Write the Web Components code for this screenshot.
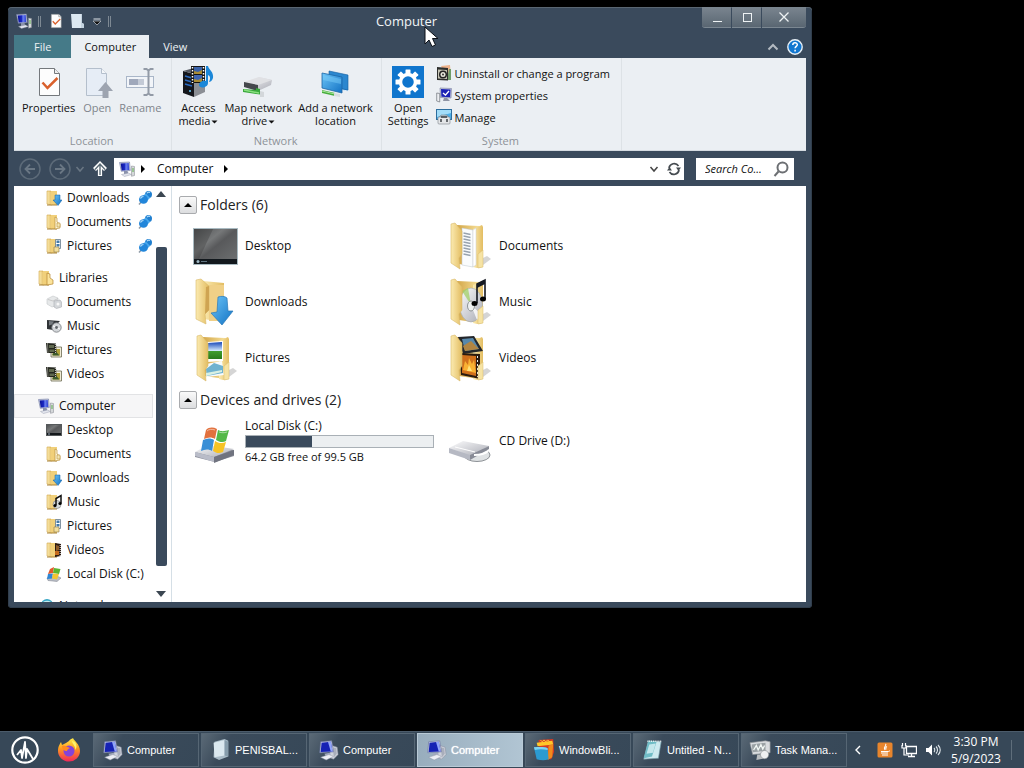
<!DOCTYPE html>
<html lang="en">
<head>
<meta charset="utf-8">
<title>Computer</title>
<style>
  html, body { height: 100%; }
  body {
    margin: 0;
    background: #000;
    color: #111;
    overflow: hidden;
    font: 12px/16px "Open Sans", "Noto Sans", sans-serif;
    --chrome: #3a4a5c;
    --ribbon: #ebeff3;
  }
</style>
</head>
<body>
<desktop-screen>
  <explorer-window>
    <title-bar slot="title">Computer</title-bar>
    <ribbon-tabs slot="tabs"></ribbon-tabs>

    <ribbon-bar slot="ribbon">
      <ribbon-group label="Location" class="wide">
        <ribbon-button icon="properties">Properties</ribbon-button>
        <ribbon-button icon="open" disabled>Open</ribbon-button>
        <ribbon-button icon="rename" disabled>Rename</ribbon-button>
      </ribbon-group>
      <ribbon-group label="Network">
        <ribbon-button icon="media" menu>Access<br>media</ribbon-button>
        <ribbon-button icon="mapdrive" menu>Map network<br>drive</ribbon-button>
        <ribbon-button icon="addlocation">Add a network<br>location</ribbon-button>
      </ribbon-group>
      <ribbon-group label="System">
        <ribbon-button icon="settings">Open<br>Settings</ribbon-button>
        <ribbon-list>
          <ribbon-link icon="uninstall">Uninstall or change a program</ribbon-link>
          <ribbon-link icon="sysprops">System properties</ribbon-link>
          <ribbon-link icon="manage">Manage</ribbon-link>
        </ribbon-list>
      </ribbon-group>
    </ribbon-bar>

    <address-bar slot="address">Computer</address-bar>

    <nav-tree slot="nav">
      <nav-item icon="f-downloads" pinned>Downloads</nav-item>
      <nav-item icon="f-documents" pinned>Documents</nav-item>
      <nav-item icon="f-pictures" pinned>Pictures</nav-item>
      <nav-item icon="f-library" top>Libraries</nav-item>
      <nav-item icon="l-documents">Documents</nav-item>
      <nav-item icon="l-music">Music</nav-item>
      <nav-item icon="l-film">Pictures</nav-item>
      <nav-item icon="l-film">Videos</nav-item>
      <nav-item icon="pc" top selected>Computer</nav-item>
      <nav-item icon="f-desktop">Desktop</nav-item>
      <nav-item icon="f-documents">Documents</nav-item>
      <nav-item icon="f-downloads">Downloads</nav-item>
      <nav-item icon="f-music">Music</nav-item>
      <nav-item icon="f-pictures">Pictures</nav-item>
      <nav-item icon="f-videos">Videos</nav-item>
      <nav-item icon="f-disk">Local Disk (C:)</nav-item>
      <nav-item icon="globe" top>Network</nav-item>
    </nav-tree>

    <item-group label="Folders (6)">
      <folder-item icon="desktop">Desktop</folder-item>
      <folder-item icon="documents">Documents</folder-item>
      <folder-item icon="downloads">Downloads</folder-item>
      <folder-item icon="music">Music</folder-item>
      <folder-item icon="pictures">Pictures</folder-item>
      <folder-item icon="videos">Videos</folder-item>
    </item-group>
    <item-group label="Devices and drives (2)">
      <folder-item icon="disk" used="35.3" size="99.5" note="64.2 GB free of 99.5 GB">Local Disk (C:)</folder-item>
      <folder-item icon="cd">CD Drive (D:)</folder-item>
    </item-group>
  </explorer-window>

  <task-bar slot="taskbar">
    <task-button icon="pclarge">Computer</task-button>
    <task-button icon="notepadfile">PENISBAL...</task-button>
    <task-button icon="pclarge">Computer</task-button>
    <task-button icon="pclarge" active>Computer</task-button>
    <task-button icon="blinds">WindowBli...</task-button>
    <task-button icon="notepad">Untitled - N...</task-button>
    <task-button icon="taskman">Task Mana...</task-button>
  </task-bar>
</desktop-screen>

<script>
const GRADS = `
<defs>
  <linearGradient id="fold" x1="0" x2="1"><stop offset="0" stop-color="#fbeab0"/><stop offset="1" stop-color="#e3bd62"/></linearGradient>
  <linearGradient id="back" x1="0" x2="1"><stop offset="0" stop-color="#d3a648"/><stop offset="1" stop-color="#f6df98"/></linearGradient>
  <linearGradient id="blue" x1="0" y1="0" x2="1" y2="1"><stop offset="0" stop-color="#6cc4f7"/><stop offset="1" stop-color="#1272c4"/></linearGradient>
  <linearGradient id="scr" x1="0" y1="0" x2="1" y2="0"><stop offset="0" stop-color="#0a1296"/><stop offset=".5" stop-color="#1d2cc8"/><stop offset=".6" stop-color="#6f86f2"/><stop offset="1" stop-color="#2a3cd0"/></linearGradient>
  <linearGradient id="metal" x1="0" y1="0" x2="1" y2="1"><stop offset="0" stop-color="#fdfdfe"/><stop offset="1" stop-color="#a9abb4"/></linearGradient>
  <linearGradient id="dark" x1="0" y1="0" x2="1" y2="1"><stop offset="0" stop-color="#4b4d4f"/><stop offset=".35" stop-color="#767879"/><stop offset=".5" stop-color="#58595b"/><stop offset="1" stop-color="#707374"/></linearGradient>
  <linearGradient id="sky" x1="0" y1="0" x2="0" y2="1"><stop offset="0" stop-color="#1747b8"/><stop offset=".5" stop-color="#cfe6fb"/><stop offset=".55" stop-color="#3f9c2c"/><stop offset="1" stop-color="#2a7a1c"/></linearGradient>
  <linearGradient id="fire" x1="0" y1="0" x2="0" y2="1"><stop offset="0" stop-color="#fff04a"/><stop offset=".45" stop-color="#ff9a1f"/><stop offset="1" stop-color="#f0275a"/></linearGradient>
</defs>`;

// open folder, 48px: cover on the left, contents in between
const folder = (inner) => `
  <path d="M34 46l12-9-4-3-8 4z" fill="#888" opacity=".35"/>
  <path d="M12 3l22 1v41l-20-3z" fill="url(#back)"/>
  <path d="M28 7l9-4 1 2v40l-6 1-4-1z" fill="url(#fold)"/>
  ${inner}
  <path d="M33 32l5-4v17l-5 1z" fill="#f6e3a4" stroke="#d9bb6a" stroke-width=".5"/>
  <path d="M6 2l4-1 7 8v23l-3 4 1 11-9-6z" fill="url(#fold)" stroke="#d9b96a" stroke-width=".6"/>`;

// small folder, 16px
const smallFolder = (inner = "") => `
  <path d="M4 1h7v14l-7-1z" fill="url(#back)"/>
  <path d="M1 1h4l1 2v12l-5-1z" fill="url(#fold)" stroke="#d0a548" stroke-width=".6"/>
  <path d="M5 1h6v14H5z" fill="#f1d07a"/>
  <path d="M1 15h10" stroke="#a98438"/>${inner}`;

const ICONS = {
  pc: [16, `<path d="M.5 1.500l10-.5.8 8.500-9 .8z" fill="#c3c9e0" stroke="#6d779f" stroke-width=".6"/>
    <path d="M1.700 2.500l8-.5.600 7-7.600.5z" fill="url(#scr)"/>
    <path d="M5 10h3.500l1 3H5z" fill="#8a92ac"/><path d="M2.500 13.500l7-1.500 3 1.500-7 2z" fill="#e3e6ee" stroke="#8b91a5" stroke-width=".4"/>
    <path d="M12.500 5l3 .5v9l-3 .8z" fill="#d5d8da" stroke="#80858c" stroke-width=".5"/><path d="M13 8h2M13 10h2" stroke="#5fae4e"/>`],
  pclarge: [24, `<path d="M16 7l6 2 1 8-5 5-5-2z" fill="#cfd3dc" stroke="#8a90a0" stroke-width=".6"/><path d="M17 9l4 1 .5 6-3 4z" fill="#a9aebb"/>
    <path d="M4 3l12-1 2 12-15 1z" fill="#c9cfe8" stroke="#6974a0" stroke-width=".7"/><path d="M5 4l10-1 2 10.500-13 .8z" fill="#1622b4"/><path d="M12 3.300l3-.3 2 10.500-2 .1z" fill="#90a4f8"/>
    <path d="M8 16l6-1 1 3-5 1z" fill="#a1a8bd"/><path d="M4 20l9-3 5 2-8 4z" fill="#eceef4" stroke="#9298a8" stroke-width=".5"/>`],
  properties: [32, `<path d="M6.500 2.500h15l5 5v22h-20z" fill="#fdfdfd" stroke="#74787c"/><path d="M21.500 2.500v5h5" fill="#eee" stroke="#74787c"/>
    <path d="M9.500 16.500l5 5.500 10-10" fill="none" stroke="#d9602c" stroke-width="2.500"/>`],
  open: [32, `<path d="M5.500 2.500h15l5 5v22h-20z" fill="#e6edf6" stroke="#b4bfcc"/><path d="M20.500 2.500v5h5" fill="#f4f7fa" stroke="#b4bfcc"/>
    <path d="M24.500 16l7.500 9h-4.500v7h-6v-7H17z" fill="#9da4b0"/>`],
  rename: [32, `<rect x="2.500" y="10.500" width="27" height="11" fill="#f2f5f9" stroke="#a9b6c8"/><rect x="5" y="13" width="15" height="6" fill="#9fa8bb"/><path d="M14 13h6v6h-6z" fill="#c3cad6"/>
    <path d="M19.500 3h3l2 1.500 2-1.500h3M19.500 29h3l2-1.500 2 1.500h3M24.500 4.500v23" fill="none" stroke="#929aa6" stroke-width="2"/>`],
  media: [32, `<path d="M1 5l11 3v23L1 27z" fill="#15171c"/><path d="M12 8l11-3v21l-11 5z" fill="#8b8f95"/><path d="M1 5l11-3 11 3-11 3z" fill="#565a62"/>
    <path d="M3 10l7 2M3 14l7 2M3 18l7 2" stroke="#2c6cc2" stroke-width="1.500"/><path d="M8 24v2" stroke="#6bd0ff" stroke-width="1.500"/>
    <path d="M9 0h14v17H9z" fill="#141414"/><path d="M12 1h8v7h-8z" fill="#3b62a8"/><path d="M12 9h8v7h-8z" fill="#3d64b0"/><path d="M12 5l4 1 4-2v4h-8zM12 13l4 1 4-2v4h-8z" fill="#a98c35"/>
    <path d="M10.500 1v16M21.500 1v16" stroke="#fff" stroke-width="1.500" stroke-dasharray="1.500 1.500"/>
    <path d="M24 0h2c1 4 6 6 5 12-1 3-3 4-4 4 2-4 1-6-1-7v8c0 5-9 6-9 2 0-3 4-5 7-4z" fill="#1b87d8"/>`],
  mapdrive: [32, `<path d="M2 16l15-5 13 3-1 5-13 6-14-4z" fill="url(#metal)"/><path d="M2 16l15-5 13 3-14 5z" fill="#e0e1e4"/><path d="M2 16l14 3v6L2 21z" fill="#45484c"/>
    <path d="M1 23l13 1v-2l4 1v3l4 1v2l-8-1-13-2z" fill="#39a83c"/><path d="M2 24l15 3" stroke="#8ae07f" stroke-width="1.500"/><path d="M18 25l4 1v5h-4z" fill="#d3d7da"/>`],
  addlocation: [32, `<path d="M9 5l19 4v16l-5-1" fill="#2d8ed8" stroke="#d9ecfa"/><path d="M9 5l19 4v15l-19-4z" fill="#2b87cf" stroke="#1a5e9c" stroke-width=".6"/>
    <path d="M2 7l20 4v16L2 22z" fill="url(#blue)" stroke="#1c66a5" stroke-width=".8"/><path d="M3 9l18 4v5L3 14z" fill="#7fd0fa" opacity=".45"/>
    <path d="M2 24l13 3v3L2 27z" fill="#46ad3c"/><path d="M2 25l13 3" stroke="#a8e79a"/><path d="M14 27l6 1v3l-6-1z" fill="#d8dde0"/>`],
  settings: [32, `<rect width="32" height="32" fill="#0f75cd"/><g fill="#fff" transform="translate(16 16)">
    <g id="t"><rect x="-2.500" y="-12.500" width="5" height="5" rx=".5"/><rect x="-2.500" y="7.500" width="5" height="5" rx=".5"/></g>
    <use href="#t" transform="rotate(45)"/><use href="#t" transform="rotate(90)"/><use href="#t" transform="rotate(135)"/></g>
    <circle cx="16" cy="16" r="7.500" fill="none" stroke="#fff" stroke-width="3.500"/>`],
  uninstall: [16, `<path d="M5 1l9-1 1 12-3 3z" fill="#eeb38c"/><path d="M13 4h2v11h-4z" fill="#6f9c6a"/><path d="M1 2l11 1v12.500L1 15z" fill="#2c2e2c"/><path d="M2 4.500l9 .5v9L2 13.500z" fill="#c7c6b6"/>
    <circle cx="7" cy="9.500" r="4" fill="#222"/><circle cx="7" cy="9.500" r="2.500" fill="#e8e8dc"/><circle cx="7" cy="9.500" r="1" fill="#333"/>`],
  sysprops: [16, `<path d="M4 1l11.500.5-.5 9.500L4.500 10.500z" fill="#c9cde0" stroke="#777e9c" stroke-width=".6"/><path d="M5 2l9.500.4-.4 7.800L5.400 9.800z" fill="#1b22b4"/><path d="M7 6l2.500 2L13 4" fill="none" stroke="#fff" stroke-width="1.300"/>
    <path d="M8 11h3l3 3H7z" fill="#8f94a4"/><path d="M.7 6l3 .5V15l-3-1z" fill="#eceef2" stroke="#6f737a" stroke-width=".7"/>`],
  manage: [16, `<rect x=".5" y=".5" width="15" height="10" fill="#4aaee8" stroke="#2d6e9e"/><path d="M1 1h14v3L1 8z" fill="#a2dcf8"/><path d="M3 9l2-3h6l2 3" fill="#b4c4ce" stroke="#70808c" stroke-width=".6"/><rect x="2" y="8" width="12" height="7" rx="1" fill="#e4e6e8" stroke="#7b8288" stroke-width=".6"/><path d="M5 10v3M11 10v3M5 8h6" stroke="#3c4146" stroke-width="1.500"/>`],
  "f-downloads": [16, smallFolder(`<path d="M9 5h5v5h2l-4 5.500L7 10h2z" fill="url(#blue)" stroke="#0d5fa6" stroke-width=".5"/>`)],
  "f-documents": [16, smallFolder(`<path d="M9 3l2 1v4l3 2v4l-5 1z" fill="#fdf5d4" stroke="#bc9340" stroke-width=".7"/><path d="M11 9h3v4h-3z" fill="#f3e6b4" stroke="#bc9340" stroke-width=".6"/>`)],
  "f-library": [16, smallFolder(`<path d="M9 3l3 1v4l3 2v4l-6 1z" fill="#fbe39a" stroke="#b48530" stroke-width=".7"/>`)],
  "f-pictures": [16, smallFolder(`<path d="M9.500 1.500h5v9h-5z" fill="#fff" stroke="#62798c" stroke-width=".8"/><path d="M10.500 2.500h3V5h-3zM10.500 6h3v2.500h-3z" fill="#4379a8"/><path d="M8 9h5v5H8z" fill="#f3df9c" stroke="#8d7a4a" stroke-width=".6"/>`)],
  "f-music": [16, smallFolder(`<circle cx="11" cy="10.500" r="4" fill="#d4dadd" stroke="#777" stroke-width=".6"/><path d="M10 11V4.500l5-3v8" fill="none" stroke="#111" stroke-width="1.500"/><circle cx="9" cy="11.500" r="1.600"/><circle cx="14" cy="9.500" r="1.600"/>`)],
  "f-videos": [16, smallFolder(`<path d="M9 1l6 1v12l-6 1z" fill="#2b1a10"/><path d="M10 3l3 1v4l-3 1z" fill="#8c5a28"/><path d="M9 9h4v4H9z" fill="#c46a1c"/><path d="M14.200 3v11" stroke="#fff" stroke-width="1" stroke-dasharray="1 1"/>`)],
  "f-desktop": [16, `<rect x=".5" y="2.500" width="15" height="11" fill="url(#dark)" stroke="#565a5c"/><path d="M1 11h14v2H1z" fill="#14181b"/><path d="M2 12h2" stroke="#9ab"/>`],
  "f-disk": [16, `<path d="M1 12l10-2 4 2-4 3.500-9-1z" fill="#b9bdc6" stroke="#7a7e88" stroke-width=".5"/><path d="M4 3l4-2-1 6-5 1z" fill="#e3582a"/><path d="M8 2l6.500 1L13 8 7 7z" fill="#5cb531"/><path d="M2 8l5-.5-1 5-5 .5z" fill="#2f86d4"/><path d="M7 7.500l6 .5-2 5.500-5-1z" fill="#f4c430"/>`],
  "l-documents": [16, `<path d="M1 5l6-3 5 2v7l-6 2-5-3z" fill="#e6e8e9" stroke="#c4c7ca" stroke-width=".6"/><path d="M2 5.500l5 1.500 5-2.500" fill="none" stroke="#bbb" stroke-width=".7"/><path d="M8 7l6-1 1.500 2v5l-5 1.500L8 13z" fill="#d4d7da" stroke="#a9adb1" stroke-width=".6"/><circle cx="12" cy="10" r="1.500" fill="#f8f8f8"/>`],
  "l-music": [16, `<path d="M1 2l13 1-3 3-4 3v3l-6-1z" fill="#303336"/><path d="M3 3l5 .5-2 3-3 1z" fill="#767b80"/><circle cx="10.500" cy="9.500" r="4.700" fill="#d3d6d9" stroke="#75797d" stroke-width=".8"/><path d="M7 8l7 3" stroke="#fff"/><circle cx="10.500" cy="9.500" r="1.400" fill="#60656a"/>`],
  "l-film": [16, `<path d="M5 5h10.500v10H5z" fill="#f0ecd8" stroke="#6a6a52" stroke-width=".8"/><path d="M6.500 7h7.500v6.500H6.500z" fill="#b1a23b"/><path d="M6.500 12l3-3 4 4.500h-7z" fill="#3c5a2c"/>
    <path d="M0 1l10 .5.500 9.500L1 11z" fill="#24261f"/><path d="M3 3h5v3H3zM3.500 7.500h5V10h-5z" fill="#5f684e"/><path d="M1.500 1.500l.5 10M9.300 2l.3 9" stroke="#e4e4d8" stroke-width=".9" stroke-dasharray="1 1"/>`],
  globe: [16, `<circle cx="9" cy="7" r="6" fill="#35a5c4"/><path d="M5 4c3-2 6-1 8 0-2 2-5 1-8 0z" fill="#bfeaf0"/><path d="M9 8h6v5H9z" fill="#2c57b8"/>`],
  pin: [16, `<path d="M2 14.500l4-4.500" stroke="#8d99a5" stroke-width="1.500"/><circle cx="11.500" cy="4.500" r="3.500" fill="#1f7fd0"/><path d="M6 5.500l3-2L13 8l-2.500 2.500z" fill="#4aa9ee"/><ellipse cx="6.500" cy="9.500" rx="4.500" ry="4.300" fill="#2286da"/><path d="M3.500 8.500c.5-1.500 2-2 3-2M10 3.300c.5-1 2-1.500 3-.8" fill="none" stroke="#b7e0fb" stroke-width="1.200"/>`],
  desktop: [48, `<rect x="2.500" y="6.500" width="44" height="36" fill="url(#dark)" stroke="#a9bac1"/><path d="M3 37h43v5H3z" fill="#12181d"/><circle cx="7" cy="39.500" r="1.500" fill="#9fb8c4"/><path d="M10 39.500h6" stroke="#607480"/><path d="M3 7h19L8 37H3z" fill="#333" opacity=".3"/>`],
  documents: [48, folder(`<path d="M17 6l11 2v37l-11-2z" fill="#fafcfd" stroke="#bcc6cc" stroke-width=".5"/><path d="M18.500 11l7 1.500M18.500 14l7 1.500M18.500 17l7 1.500M18.500 20l7 1.500M18.500 23l7 1.500M18.500 26l7 1.500M18.500 29l7 1.500M18.500 32l7 1.500" stroke="#98a3ae" stroke-width="1.400"/><path d="M28 8l3-2v37l-3 2z" fill="#fff" stroke="#c8ced2" stroke-width=".5"/>`)],
  downloads: [48, `<path d="M12 3l21 2v39l-21-3z" fill="url(#fold)"/><path d="M18 7h15v36H18z" fill="#f0d087"/>
    <path d="M5 2l5-1 8 7v24l-4 4 1 10-10-5z" fill="url(#fold)" stroke="#d9b96a" stroke-width=".6"/><path d="M15 9l3-1v24l-4 4z" fill="#cfa452"/>
    <path d="M27 19c3-1 7-1 9 1l1 13h5L31 47 20 35l6-1z" fill="url(#blue)" stroke="#2a78b8" stroke-width=".7"/>`],
  music: [48, folder(`<ellipse cx="26" cy="27" rx="11.500" ry="17" fill="url(#metal)" stroke="#a2a7a8" stroke-width=".6"/><path d="M26 27L17 13l6-3z" fill="#9ccf5e" opacity=".7"/><path d="M26 27l6 15 4-6z" fill="#fff" opacity=".8"/><ellipse cx="26" cy="28" rx="3.500" ry="5" fill="#eef0f0" stroke="#8d9394"/>`)
    + `<path d="M32 25V6l8-4v19" fill="none" stroke="#141821" stroke-width="1.600"/><path d="M32 6l8-4v4l-8 4z" fill="#141821"/><ellipse cx="29.500" cy="25.500" rx="3" ry="2.500"/><ellipse cx="38" cy="21" rx="3" ry="2.500"/>`],
  pictures: [48, folder(`<path d="M16 8l16-1v20l-16 1z" fill="#fff"/><path d="M17 9l14-1v17H17z" fill="url(#sky)"/><path d="M15 30l16-3 2 14-17 2z" fill="#f8fbfc"/><path d="M15 35l8-6 9 3v7l-16 3z" fill="#6fb2cf"/><path d="M15 39l16-3v2l-16 4z" fill="#d9f0e2"/>`)],
  videos: [48, folder(`<path d="M13 3l16-1 9 15-20 3z" fill="#23262b"/><path d="M17 5l11-1 6 11-14 2z" fill="#5788ab"/><path d="M18 12l8-5 8 8-14 2z" fill="#b18542"/><path d="M15 19l20 1v25l-19-4z" fill="#2a1b10"/><path d="M17 21l14 1v20l-14-3z" fill="#d0701c"/><path d="M18 36l2-9 3 4 1-7 3 6 2-4 2 13z" fill="#f9b233"/><path d="M22 37l2-6 3 6z" fill="#ffe27a"/><path d="M32.500 22v21" stroke="#eee" stroke-dasharray="2 2"/>`)],
  disk: [48, `<path d="M4 36l13-7 26 4v6L24 45 4 40z" fill="#8c8f9b"/><path d="M4 35l13-7 26 4-20 8z" fill="url(#metal)"/><path d="M4 35l19 5v5L4 39z" fill="#b9bcc8"/><path d="M23 40l20-7v5l-20 8z" fill="#70737f"/>
    <path d="M15 13c3-3 7-3 11-1l-2 10c-3-2-7-2-11 0z" fill="#e2713d"/><path d="M27 13c4 2 7 1 11 0l-3 11c-3 2-7 1-10-1z" fill="#54b848"/><path d="M12 23c4-2 8-2 11 0l-2 11c-3-2-7-2-11 0z" fill="#3a8fd6"/><path d="M24 24c3 2 7 3 11 1l-3 10c-4 2-7 1-10-1z" fill="#f6c325"/><path d="M16 14c2-2 5-2 8-1M28 15c3 1 5 1 8 0" fill="none" stroke="#fff" opacity=".5"/>`],
  cd: [48, `<ellipse cx="32" cy="38" rx="13" ry="6.500" fill="#dfe2e4" stroke="#8d9196"/><path d="M4 31l14-7 26 5-19 10z" fill="url(#metal)"/><path d="M4 31l21 7v5L4 36z" fill="#b6b9c3"/><path d="M25 38l19-9v3l-19 11z" fill="#888b96"/><path d="M10 30l20 5" stroke="#fff"/><path d="M29 38c6 0 11-1 14-4" fill="none" stroke="#fff" stroke-width="2"/>`],
  newfolder: [16, `<path d="M1 1h11v9l2 1v4H2z" fill="#dce8f1"/><path d="M12 1v9l2 1v4h-3V1z" fill="#c3d3df"/>`],
  notepadfile: [24, `<path d="M6 3l11-3 4 2v17l-10 4-6-3z" fill="#a9bbc7"/><path d="M5 4l12-3v17L6 20z" fill="#dbe8ef"/><path d="M17 1l4 2v16l-4-1z" fill="#869cab"/>`],
  blinds: [24, `<path d="M6 1l16-1 1 14-3 8H8z" fill="#d33a24"/><path d="M4 4l17-2 1 4-17 2z" fill="#ffc629"/><path d="M17 7l5-1-1 14-5 3z" fill="#f08a1c"/><path d="M1 9c5 0 10-1 15 1l1 12c-5 2-9 1-13 0z" fill="#2b9bd2"/><path d="M1 9c5 0 10-1 15 1v2C11 11 6 11 2 12z" fill="#7fd2f2"/><path d="M8 1l2 2 2-2 2 2 2-2 2 2" fill="none" stroke="#ffd23c"/>`],
  notepad: [24, `<path d="M8 2l14 1-3 18-16 1z" fill="#cdeaf0" stroke="#6f98a4" stroke-width=".7"/><path d="M8 2l9 1-5 16-9 2z" fill="#6fbcc6"/><path d="M9 6l7-1-3 10-7 1z" fill="#e8fafc" opacity=".7"/><path d="M7 2.500h15" stroke="#f4f6f6" stroke-width="1.500" stroke-dasharray="1 1"/>`],
  taskman: [24, `<path d="M1 4l17-2 5 1v12l-19 2z" fill="#d9dcdf" stroke="#909498" stroke-width=".7"/><path d="M3 6l15-2v9L4 14.500z" fill="#9aa1a4"/><path d="M5 12l3-5 2 5 3-6 2 5 2-4" fill="none" stroke="#f2f8f5" stroke-width="1.400"/><path d="M9 17h6l3 4-10 2z" fill="#b9bdc0"/><circle cx="17" cy="17" r="4.500" fill="#eef0f1" stroke="#8a8e92" stroke-width=".7"/>`],
  firefox: [24, `<path d="M12 3c2-3 4-2 4-3 1 3 7 6 7 13a11 10.500 0 0 1-22 0C1 8 3 6 4 4l1 3 4-2z" fill="url(#fire)"/><circle cx="12" cy="13" r="5.500" fill="#8443d8"/><path d="M5 8c3-1 5 1 8 2-2 1-3 2-3 3-3 0-5-2-5-5z" fill="#ff8a1f"/><path d="M15 3c0 3 4 5 3 9 2-2 2-5 0-8z" fill="#fff36b"/>`],
  start: [28, `<circle cx="14" cy="14" r="12.700" fill="none" stroke="#fff" stroke-width="2.200"/><path d="M6 19l4-5 1 8 3-16 1 16 1-9 6 10" fill="none" stroke="#fff" stroke-width="1.800" stroke-linejoin="round"/>`],
  java: [16, `<rect x=".5" y=".5" width="15" height="15" rx="1.500" fill="#e8852c"/><path d="M4 11h7M5 13h6M4 9.500h6c2 0 2 0 3-1" fill="none" stroke="#fff"/><path d="M8.500 2c2 2-3 2.500-.5 6M10 4.500c-2 1-1 1.500-1 3" fill="none" stroke="#fff" stroke-width="1.100"/>`],
  lan: [16, `<path d="M5.500 4.500h10v7h-10zM7 14.500h7M10.500 12v2" fill="none" stroke="#fff" stroke-width="1.300"/><path d="M1 3v3h4V3M3 6v7h5M1.500 1v3M4.500 1v3" fill="none" stroke="#fff" stroke-width="1.200"/>`],
  volume: [16, `<path d="M1 6h2.500L7 2.500v11L3.500 10H1z" fill="#fff"/><path d="M9 6c1 1 1 3 0 4M11 4.500c2 2 2 5 0 7M13 3c3 3 3 7 0 10" fill="none" stroke="#dfe6ea" stroke-width="1.100"/>`],
  back: [22, `<circle cx="11" cy="11" r="10" fill="none" stroke="#5d6b79" stroke-width="1.500"/><path d="M16 11H7M11 6.500L6.500 11l4.500 4.500" fill="none" stroke="#6a7784" stroke-width="1.800"/>`],
  forward: [22, `<circle cx="11" cy="11" r="10" fill="none" stroke="#5d6b79" stroke-width="1.500"/><path d="M6 11h9M11 6.500l4.500 4.500-4.500 4.500" fill="none" stroke="#6a7784" stroke-width="1.800"/>`],
  up: [16, `<path d="M8 15V3M2.500 8.500L8 3l5.500 5.500" fill="none" stroke="#fff" stroke-width="4.200"/><path d="M8 14V3.500M3 8.500L8 3l5 5.500" fill="none" stroke="#5b6b76" stroke-width="1.400"/>`],
  down: [10, `<path d="M1.500 3L5 7l3.500-4" fill="none" stroke="currentColor" stroke-width="1.500"/>`],
  caret: [8, `<path d="M1.500 2.500h6L4.500 5.500z" fill="currentColor"/>`],
  crumb: [8, `<path d="M2 0v8l4-4z" fill="#000"/>`],
  refresh: [14, `<path d="M2 6a5.200 5.200 0 0 1 9.500-2M12 8a5.200 5.200 0 0 1-9.500 2" fill="none" stroke="#454b50" stroke-width="1.700"/><path d="M9 5.500h5L11.500 9zM5 8.500H0L2.500 5z" fill="#454b50"/>`],
  search: [16, `<circle cx="9.500" cy="6.500" r="5" fill="none" stroke="#6c6f73" stroke-width="2"/><path d="M5.500 10.500L1.500 15" stroke="#6c6f73" stroke-width="2"/>`],
  help: [16, `<circle cx="8" cy="8" r="7.200" fill="#1277d0" stroke="#e8f0f6" stroke-width="1.400"/><path d="M5.800 6c0-3 4.500-2.800 4.500-.3 0 1.600-2.200 1.700-2.200 3.500M8.100 10.800v1.600" fill="none" stroke="#fff" stroke-width="1.500"/>`],
  collapse: [12, `<path d="M1.500 8.500L6 4l4.500 4.500" fill="none" stroke="#b3bac2" stroke-width="2"/>`],
  qmenu: [10, `<path d="M1.500 3h7" stroke="#dfe4e8"/><path d="M1 5h8L5 9z" fill="#111" stroke="#c6ccd2" stroke-width=".7"/>`],
  chevleft: [10, `<path d="M7 1L3 5l4 4" fill="none" stroke="#fff" stroke-width="1.400"/>`],
  min: [14, `<path d="M3 11.500h9" stroke="#eef2f4"/>`],
  max: [14, `<rect x="3.500" y="3.500" width="8" height="8" fill="none" stroke="#eef2f4"/>`],
  close: [14, `<path d="M2.500 2.500l9 9M11.500 2.500l-9 9" stroke="#eef2f4" stroke-width="1.300"/>`],
  pointer: [22, `<path d="M2 1v17l4-4 3 6.500 3.500-1.500-3-6.500H15z" fill="#fff" stroke="#0a0f16"/>`]
};

// shared by every element: template in, open shadow root out
class BaseElement extends HTMLElement {
  constructor() {
    super();
    this.attachShadow({mode: "open"});
  }
  connectedCallback() {
    const template = document.createElement("template");
    template.innerHTML = `
<style>
  * { box-sizing: border-box; }
  :host { display: block; box-sizing: border-box; }
  button, input { font: inherit; color: inherit; background: none; border: 0; padding: 0; margin: 0; }
  a { color: inherit; text-decoration: none; }
</style>${this.render()}`;
    this.shadowRoot.replaceChildren(template.content.cloneNode(true));
  }
}

customElements.define("ui-icon", class extends BaseElement {
  render() {
    const [box, art] = ICONS[this.getAttribute("name")];
    const size = this.getAttribute("size") || box;
    return `
<style>
  :host { flex: none; width: ${size}px; height: ${size}px; }
  svg { display: block; }
</style>
<svg width="${size}" height="${size}" viewBox="0 0 ${box} ${box}" aria-hidden="true">${GRADS}${art}</svg>`;
  }
});

customElements.define("desktop-screen", class extends BaseElement {
  render() {
    return `
<style>
  :host { display: flex; flex-direction: column; height: 100%; }
  main { flex: 1; min-height: 0; display: flex; padding: 7px 212px 123px 8px; }
  ui-icon { position: absolute; left: 423px; top: 26px; }
</style>
<main><slot></slot></main>
<slot name="taskbar"></slot>
<ui-icon name="pointer"></ui-icon>`;
  }
});

customElements.define("explorer-window", class extends BaseElement {
  render() {
    return `
<style>
  :host {
    flex: 1; min-width: 0; display: flex; flex-direction: column;
    padding: 0 6px 6px; background: var(--chrome);
    border-radius: 4px; box-shadow: inset 0 1px #5a6672, inset 0 0 0 1px #313e4c;
  }
  .body { flex: 1; min-height: 0; display: flex; background: #fff; }
  section { flex: 1; min-width: 0; padding: 5px 7px; overflow: hidden; }
</style>
<slot name="title"></slot>
<slot name="tabs"></slot>
<slot name="ribbon"></slot>
<slot name="address"></slot>
<div class="body"><slot name="nav"></slot><section><slot></slot></section></div>`;
  }
});

customElements.define("title-bar", class extends BaseElement {
  render() {
    return `
<style>
  :host { display: grid; grid-template-columns: 1fr auto 1fr; height: 28px; color: #f2f5f7; }
  .quick { display: flex; align-items: center; gap: 6px; padding-left: 2px; color: #aab2ba; }
  .quick button, .controls button { display: grid; place-items: center; }
  .quick .bar { width: 3px; height: 11px; border: solid #7e8993; border-width: 0 1px; }
  .quick .bar + button { margin-left: 1px; }
  h1 { margin: 0 7px 0 0; font: 13px/28px "Open Sans", sans-serif; }
  .controls { display: flex; justify-content: flex-end; align-items: start; gap: 1px; }
  .controls button { width: 29px; height: 21px; background: linear-gradient(#7a858f, #6a7681 50%, #596672); border-bottom: 1px solid #7b8791; }
  .controls button:first-child { border-radius: 0 0 0 3px; }
  .controls button:last-child { width: 44px; border-radius: 0 0 3px 0; }
</style>
<div class="quick">
  <ui-icon name="pc"></ui-icon><span class="bar"></span>
  <button aria-label="Properties"><ui-icon name="properties" size="16"></ui-icon></button>
  <button aria-label="New folder"><ui-icon name="newfolder"></ui-icon></button>
  <button aria-label="Customize"><ui-icon name="qmenu"></ui-icon></button>
  <span class="bar"></span>
</div>
<h1><slot></slot></h1>
<div class="controls">
  <button aria-label="Minimize"><ui-icon name="min"></ui-icon></button>
  <button aria-label="Maximize"><ui-icon name="max"></ui-icon></button>
  <button aria-label="Close"><ui-icon name="close"></ui-icon></button>
</div>`;
  }
});

customElements.define("ribbon-tabs", class extends BaseElement {
  render() {
    return `
<style>
  :host { display: flex; align-items: center; height: 23px; color: #eef2f5; font-size: 11px; }
  .tab { height: 23px; padding: 0 14px; }
  .file { background: #457a88; padding: 0 20px; }
  .on { background: var(--ribbon); color: #111; padding: 0 13px; }
  .tools { margin-left: auto; display: flex; gap: 8px; padding-right: 3px; align-items: center; }
</style>
<button class="tab file">File</button>
<button class="tab on">Computer</button>
<button class="tab">View</button>
<div class="tools">
  <button aria-label="Minimize the Ribbon"><ui-icon name="collapse"></ui-icon></button>
  <button aria-label="Help"><ui-icon name="help"></ui-icon></button>
</div>`;
  }
});

customElements.define("ribbon-bar", class extends BaseElement {
  render() {
    return `
<style>
  :host { display: flex; min-height: 93px; background: var(--ribbon); font-size: 11px; line-height: 13px; border-bottom: 1px solid #d4dae0; }
</style>
<slot></slot>`;
  }
});

customElements.define("ribbon-group", class extends BaseElement {
  render() {
    return `
<style>
  :host { display: flex; flex-direction: column; padding: 4px 8px 1px 6px; border-right: 1px solid #dde2e6; }
  .items { flex: 1; display: flex; gap: 6px; }
  :host(.wide) { padding-left: 8px; padding-right: 10px; }
  .label { text-align: center; color: #8d9298; line-height: 16px; }
</style>
<div class="items"><slot></slot></div>
<div class="label">${this.getAttribute("label")}</div>`;
  }
});

customElements.define("ribbon-button", class extends BaseElement {
  render() {
    return `
<style>
  button { display: flex; flex-direction: column; align-items: center; gap: 3px; padding-top: 4px; line-height: 13px; white-space: nowrap; }
  :host([disabled]) { color: #80858b; }
  ui-icon { display: block; }
  .menu { display: inline-block; vertical-align: middle; }
</style>
<button ${this.hasAttribute("disabled") ? "disabled" : ""}>
  <ui-icon name="${this.getAttribute("icon")}"></ui-icon>
  <span><slot></slot>${this.hasAttribute("menu") ? `<ui-icon class="menu" name="caret"></ui-icon>` : ""}</span>
</button>`;
  }
});

customElements.define("ribbon-list", class extends BaseElement {
  render() {
    return `<style>:host { padding: 0 3px 0 1px; }</style><slot></slot>`;
  }
});

customElements.define("ribbon-link", class extends BaseElement {
  render() {
    return `
<style>
  button { display: flex; align-items: center; gap: 3px; height: 22px; white-space: nowrap; }
</style>
<button><ui-icon name="${this.getAttribute("icon")}"></ui-icon><slot></slot></button>`;
  }
});

customElements.define("address-bar", class extends BaseElement {
  render() {
    return `
<style>
  :host { display: flex; align-items: center; height: 35px; padding: 0 12px 0 5px; }
  button { display: grid; place-items: center; }
  .history { display: flex; align-items: center; gap: 8px; color: #6a7784; }
  .history .menu { margin: 0 -1px 0 -4px; }
  .path, .search { display: flex; align-items: center; height: 22px; background: #fff; }
  .path { flex: 1; margin: 0 12px 0 6px; padding: 0 3px 0 5px; gap: 4px; }
  .crumb { padding: 0 4px 0 6px; }
  .path .drop { margin-left: auto; margin-right: 4px; color: #444; }
  .search { width: 98px; padding: 0 5px 0 9px; }
  input { flex: 1; min-width: 0; font-style: italic; font-size: 11px; outline: 0; }
  input::placeholder { color: #111; opacity: 1; }
</style>
<div class="history">
  <button aria-label="Back" disabled><ui-icon name="back"></ui-icon></button>
  <button aria-label="Forward" disabled><ui-icon name="forward"></ui-icon></button>
  <button class="menu" aria-label="Recent locations"><ui-icon name="down"></ui-icon></button>
  <button aria-label="Up"><ui-icon name="up"></ui-icon></button>
</div>
<div class="path">
  <ui-icon name="pc"></ui-icon><ui-icon name="crumb"></ui-icon>
  <button class="crumb"><slot></slot></button>
  <ui-icon name="crumb"></ui-icon>
  <button class="drop" aria-label="Previous locations"><ui-icon name="down"></ui-icon></button>
  <button aria-label="Refresh"><ui-icon name="refresh"></ui-icon></button>
</div>
<label class="search">
  <input type="search" aria-label="Search Computer" placeholder="Search Co...">
  <ui-icon name="search"></ui-icon>
</label>`;
  }
});

customElements.define("nav-tree", class extends BaseElement {
  render() {
    return `
<style>
  :host { display: flex; width: 158px; border-right: 1px solid #d5dfe6; overflow: hidden; }
  nav { width: 139px; overflow: hidden; }
  .scroll { margin-left: 2px; width: 12px; display: grid; grid-template-rows: 16px 45fr 319fr 20fr 16px; justify-items: center; align-items: center; color: #3b4651; }
  .thumb { grid-row: 3; width: 11px; height: 100%; background: #3a4a5c; border-radius: 2px; }
  .scroll svg { display: block; }
  .scroll svg:last-child { grid-row: 5; }
</style>
<nav><slot></slot></nav>
<div class="scroll">
  <svg width="10" height="6" viewBox="0 0 10 6"><path d="M0 6l5-6 5 6z" fill="currentColor"/></svg>
  <div class="thumb"></div>
  <svg width="10" height="6" viewBox="0 0 10 6"><path d="M0 0h10L5 6z" fill="currentColor"/></svg>
</div>`;
  }
});

customElements.define("nav-item", class extends BaseElement {
  render() {
    return `
<style>
  a { display: flex; align-items: center; gap: 5px; height: 24px; padding-left: 32px; white-space: nowrap; }
  :host([top]) { margin-top: 8px; }
  :host([top]) a { padding-left: 24px; }
  :host([selected]) a { background: #f6f6f7; box-shadow: inset 0 0 0 1px #e2e3e5; }
  .pin { margin-left: auto; }
</style>
<a href="#"><ui-icon name="${this.getAttribute("icon")}"></ui-icon><slot></slot>${this.hasAttribute("pinned") ? `<ui-icon class="pin" name="pin"></ui-icon>` : ""}</a>`;
  }
});

customElements.define("item-group", class extends BaseElement {
  render() {
    return `
<style>
  header { display: flex; align-items: center; gap: 3px; height: 27px; }
  h2 { margin: 0; font: 14px/20px "Open Sans", sans-serif; color: #222; }
  button { display: grid; place-items: center; width: 18px; height: 18px; border: 1px solid #a9abae; border-radius: 2px; background: linear-gradient(#fafafa, #dcdddf); }
  .grid { display: grid; grid-template-columns: repeat(auto-fill, 254px); padding-left: 12px; }
</style>
<header>
  <button aria-label="Collapse"><svg width="8" height="4" viewBox="0 0 8 4"><path d="M0 4l4-4 4 4z"/></svg></button>
  <h2>${this.getAttribute("label")}</h2>
</header>
<div class="grid"><slot></slot></div>`;
  }
});

customElements.define("folder-item", class extends BaseElement {
  render() {
    const size = this.getAttribute("size");
    return `
<style>
  a { display: flex; align-items: center; gap: 6px; height: 56px; }
  .text { display: flex; flex-direction: column; }
  progress { display: block; width: 189px; height: 13px; margin: 1px 0; appearance: none; border: 1px solid #a9b0b6; }
  progress::-webkit-progress-bar { background: #eceff1; }
  progress::-webkit-progress-value { background: #3a4a5c; }
  .note { font-size: 11px; }
</style>
<a href="#">
  <ui-icon name="${this.getAttribute("icon")}"></ui-icon>
  <span class="text"><slot></slot>${size ? `<progress value="${this.getAttribute("used")}" max="${size}" aria-label="Space used"></progress><span class="note">${this.getAttribute("note")}</span>` : ""}</span>
</a>`;
  }
});

customElements.define("task-bar", class extends BaseElement {
  render() {
    return `
<style>
  :host { display: flex; align-items: center; height: 37px; background: #374858; border-top: 1px solid #4b5b6a; color: #fff; }
  button { display: grid; place-items: center; }
  .start { margin-left: 11px; }
  .pin { margin: 0 12px 0 18px; }
  .tasks { flex: 1; min-width: 0; display: flex; gap: 2px; height: 100%; }
  .tray { display: flex; align-items: center; gap: 8px; }
  .chevron { margin-right: 6px; }
  .clock { width: 54px; display: block; text-align: center; line-height: 17px; white-space: nowrap; }
  .show { width: 13px; height: 20px; border-left: 1px solid #5f6e7b; }
</style>
<button class="start" aria-label="Start"><ui-icon name="start"></ui-icon></button>
<button class="pin" aria-label="Firefox"><ui-icon name="firefox"></ui-icon></button>
<div class="tasks"><slot></slot></div>
<div class="tray">
  <button class="chevron" aria-label="Show hidden icons"><ui-icon name="chevleft"></ui-icon></button>
  <ui-icon name="java"></ui-icon>
  <ui-icon name="lan"></ui-icon>
  <ui-icon name="volume"></ui-icon>
  <button class="clock">3:30 PM<br>5/9/2023</button>
  <button class="show" aria-label="Show desktop"></button>
</div>`;
  }
});

customElements.define("task-button", class extends BaseElement {
  render() {
    return `
<style>
  :host { flex: 0 1 106px; min-width: 0; }
  button {
    display: flex; align-items: center; gap: 4px; width: 100%; height: 34px; padding-left: 7px; margin-top: 1px;
    font: 11px/16px "Liberation Sans", sans-serif; white-space: nowrap; overflow: hidden;
    border: 1px solid #566674; background: linear-gradient(120deg, #5a6976, #3b4b5b 25%, #374858);
  }
  :host([active]) button { background: linear-gradient(90deg, #98adbd, #b1c5d3); border-color: #b9cad6; text-shadow: 0 0 1px #fff; }
</style>
<button><ui-icon name="${this.getAttribute("icon")}" size="22"></ui-icon><slot></slot></button>`;
  }
});
</script>
</body>
</html>
